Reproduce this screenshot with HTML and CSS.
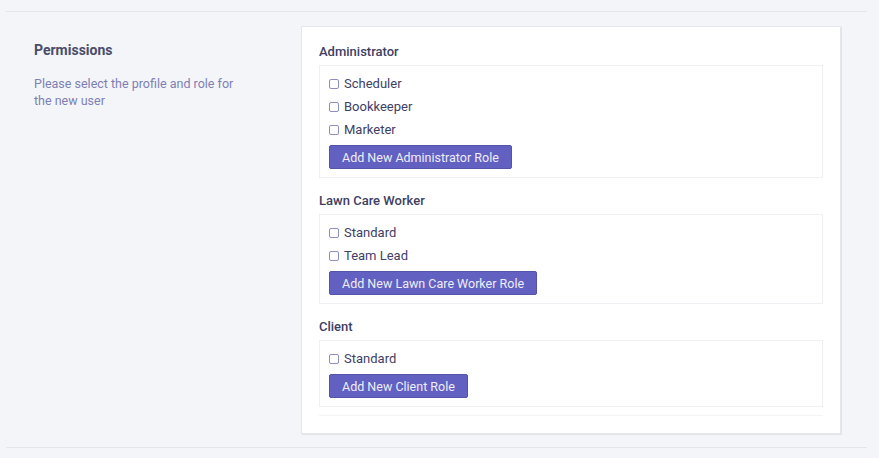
FILE: index.html
```html
<!DOCTYPE html>
<html>
<head>
<meta charset="utf-8">
<link rel="stylesheet" href="styles.css">
</head>
<body>
<div class="section">
  <div class="intro">
    <h2 class="intro-title">Permissions</h2>
    <p class="intro-text">Please select the profile and role for the new user</p>
  </div>
  <div class="card">
    <div class="group">
      <div class="group-title">Administrator</div>
      <div class="group-box">
        <label class="row"><span class="check"></span>Scheduler</label>
        <label class="row"><span class="check"></span>Bookkeeper</label>
        <label class="row"><span class="check"></span>Marketer</label>
        <button class="btn">Add New Administrator Role</button>
      </div>
    </div>
    <div class="group">
      <div class="group-title">Lawn Care Worker</div>
      <div class="group-box">
        <label class="row"><span class="check"></span>Standard</label>
        <label class="row"><span class="check"></span>Team Lead</label>
        <button class="btn">Add New Lawn Care Worker Role</button>
      </div>
    </div>
    <div class="group">
      <div class="group-title">Client</div>
      <div class="group-box">
        <label class="row"><span class="check"></span>Standard</label>
        <button class="btn">Add New Client Role</button>
      </div>
    </div>
    <div class="card-foot"></div>
  </div>
</div>
</body>
</html>
```

FILE: styles.css
```css
html, body {
  margin: 0;
  padding: 0;
  background: #f4f5f8;
  font-family: Roboto, "Liberation Sans", Arial, sans-serif;
}

.section {
  margin: 11px 12px 0 6px;
  border-top: 1px solid #e4e5ea;
  border-bottom: 1px solid #e4e5ea;
  padding: 14px 26px 13px 28px;
  display: grid;
  grid-template-columns: 267px 1fr;
}

.intro {
  padding-top: 15px;
}

.intro-title {
  margin: 0;
  font-size: 14px;
  line-height: 18px;
  font-weight: 700;
  color: #4a4c6a;
}

.intro-text {
  margin: 16px 0 0;
  width: 215px;
  font-size: 12.5px;
  line-height: 17px;
  color: #7d80b4;
}

.card {
  background: #fff;
  border: 1px solid #e6e7ec;
  box-shadow: 1px 1px 0 #e2e3e9;
  padding: 17px 17px 17px 17px;
  display: flex;
  flex-direction: column;
  gap: 15px;
}

.group-title {
  font-size: 13px;
  line-height: 16px;
  font-weight: 500;
  color: #3e4062;
  margin-bottom: 5px;
}

.group-box {
  border: 1px solid #f0f0f4;
  padding: 6px 9px 8px;
  display: flex;
  flex-direction: column;
  align-items: flex-start;
}

.row {
  display: flex;
  align-items: center;
  height: 23px;
  font-size: 13px;
  color: #3e4066;
}

.check {
  width: 8px;
  height: 8px;
  border: 1px solid #8d8fbd;
  border-radius: 2px;
  margin-right: 5px;
  background: #fff;
}

.btn {
  margin-top: 4px;
  height: 24px;
  padding: 0 12px;
  border: 1px solid #5553a8;
  border-radius: 2px;
  background: #6260c0;
  color: #eeeefa;
  font-family: Roboto, "Liberation Sans", Arial, sans-serif;
  font-size: 12.5px;
}

.card-foot {
  margin-top: -7px;
  border-top: 1px solid #f4f4f7;
}
```
